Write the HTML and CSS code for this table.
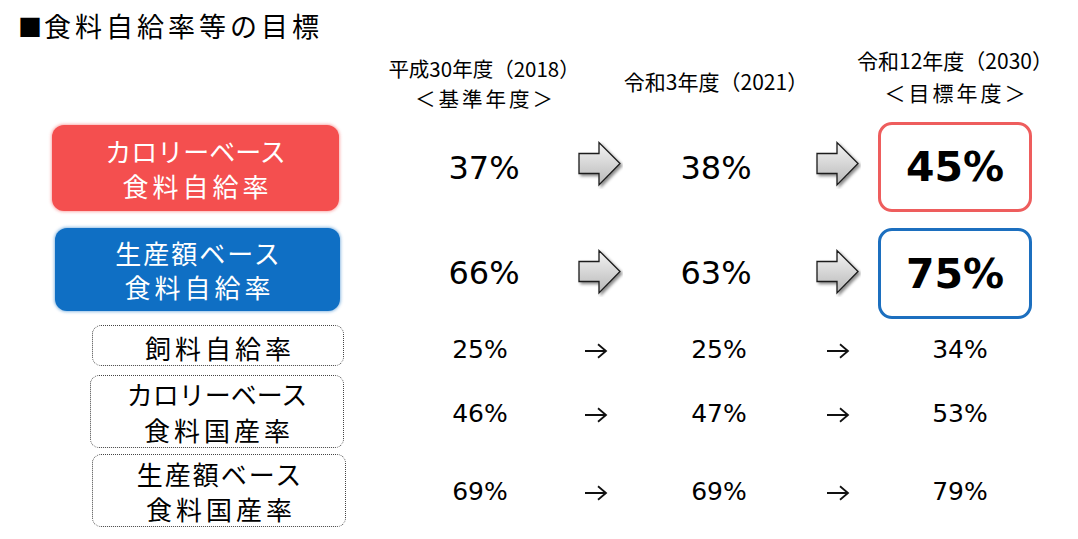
FILE: index.html
```html
<!DOCTYPE html>
<html lang="ja">
<head>
<meta charset="utf-8">
<title>食料自給率等の目標</title>
<link rel="stylesheet" href="styles.css">
</head>
<body>
<div class="page">
  <h1 class="title"><span class="sq">■</span>食料自給率等の目標</h1>

  <svg class="defs" width="0" height="0" aria-hidden="true">
    <defs>
      <linearGradient id="ag" x1="0" y1="0" x2="0" y2="1">
        <stop offset="0" stop-color="#f4f4f4"/>
        <stop offset="1" stop-color="#b8b8b8"/>
      </linearGradient>
      <filter id="ash" x="-20%" y="-20%" width="150%" height="150%">
        <feDropShadow dx="2" dy="2" stdDeviation="1.4" flood-color="#000" flood-opacity="0.45"/>
      </filter>
      <symbol id="garrow" viewBox="0 0 46 48">
        <path d="M2 12.5 H22 V1.5 L43 22.5 L22 44 V32.5 H2 Z" fill="url(#ag)" stroke="#1a1a1a" stroke-width="1.3" stroke-linejoin="miter" filter="url(#ash)"/>
      </symbol>
      <symbol id="sarrow" viewBox="0 0 24 16">
        <path d="M1 8 H22 M14 1.2 L22 8 L14 14.8" fill="none" stroke="#111" stroke-width="1.8"/>
      </symbol>
    </defs>
  </svg>

  <div class="grid">
    <div class="hd c1"><div>平成30年度（2018）</div><div class="sub">＜基準年度＞</div></div>
    <div class="hd c2">令和3年度（2021）</div>
    <div class="hd c3"><div>令和12年度（2030）</div><div class="sub">＜目標年度＞</div></div>

    <div class="lab red"><div class="kana">カロリーベース</div><div class="kanji">食料自給率</div></div>
    <div class="v1 big">37%</div>
    <div class="a1 garr up"><svg width="46" height="48"><use href="#garrow"/></svg></div>
    <div class="v2 big">38%</div>
    <div class="a2 garr up"><svg width="46" height="48"><use href="#garrow"/></svg></div>
    <div class="v3 goal goal-red">45%</div>

    <div class="lab blue"><div class="mix">生産額ベース</div><div class="kanji">食料自給率</div></div>
    <div class="v1 big">66%</div>
    <div class="a1 garr"><svg width="46" height="48"><use href="#garrow"/></svg></div>
    <div class="v2 big">63%</div>
    <div class="a2 garr"><svg width="46" height="48"><use href="#garrow"/></svg></div>
    <div class="v3 goal goal-blue">75%</div>

    <div class="lab dot one"><div class="kanji">飼料自給率</div></div>
    <div class="v1 small">25%</div>
    <div class="a1 sarr"><svg width="24" height="16"><use href="#sarrow"/></svg></div>
    <div class="v2 small">25%</div>
    <div class="a2 sarr"><svg width="24" height="16"><use href="#sarrow"/></svg></div>
    <div class="v3 small">34%</div>

    <div class="lab dot two"><div class="kana">カロリーベース</div><div class="kanji">食料国産率</div></div>
    <div class="v1 small">46%</div>
    <div class="a1 sarr"><svg width="24" height="16"><use href="#sarrow"/></svg></div>
    <div class="v2 small">47%</div>
    <div class="a2 sarr"><svg width="24" height="16"><use href="#sarrow"/></svg></div>
    <div class="v3 small">53%</div>

    <div class="lab dot two last"><div class="mix">生産額ベース</div><div class="kanji">食料国産率</div></div>
    <div class="v1 small">69%</div>
    <div class="a1 sarr"><svg width="24" height="16"><use href="#sarrow"/></svg></div>
    <div class="v2 small">69%</div>
    <div class="a2 sarr"><svg width="24" height="16"><use href="#sarrow"/></svg></div>
    <div class="v3 small">79%</div>
  </div>
</div>
</body>
</html>
```

FILE: styles.css
```css
html, body {
  margin: 0;
  padding: 0;
  background: #ffffff;
}

body {
  font-family: "Noto Sans CJK JP", "Noto Sans", sans-serif;
  color: #000;
  width: 1078px;
  height: 539px;
  overflow: hidden;
}

.page {
  position: relative;
}

.defs {
  position: absolute;
  width: 0;
  height: 0;
}

.title {
  margin: 0;
  height: 44px;
  box-sizing: border-box;
  padding: 12px 0 0 18px;
  font-size: 27px;
  line-height: 27px;
  font-weight: 400;
  letter-spacing: 4px;
  white-space: nowrap;
}

.title .sq {
  font-size: 24px;
  letter-spacing: 2px;
  vertical-align: 1px;
}

.grid {
  display: grid;
  margin-left: 52px;
  grid-template-columns: 292px 80px 120px 112px 120px 22px 80px 154px;
  grid-template-rows: 72px 104px 105px 48px 79px 78px;
}

/* headers */
.hd {
  font-size: 21px;
  white-space: nowrap;
  justify-self: center;
  align-self: start;
  text-align: center;
}
.hd .sub {
  letter-spacing: 3px;
  margin-right: -3px;
}
.c1 { grid-column: 3; font-size: 20.5px; line-height: 30px; margin-top: 9px; }
.c2 { grid-column: 5; line-height: 31px; margin-top: 22px; }
.c3 { grid-column: 8; line-height: 32px; margin-top: 0; }

/* columns */
.lab { grid-column: 1; }
.v1 { grid-column: 3; }
.a1 { grid-column: 4; }
.v2 { grid-column: 5; }
.a2 { grid-column: 7; }
.v3 { grid-column: 8; }

/* labels */
.lab {
  box-sizing: border-box;
  display: flex;
  flex-direction: column;
  justify-content: center;
  align-items: center;
  font-size: 26px;
  align-self: start;
  white-space: nowrap;
}
.lab .kanji { letter-spacing: 4px; margin-right: -4px; }
.lab .mix { letter-spacing: 2px; margin-right: -2px; }

.red {
  width: 287px;
  height: 86px;
  margin-top: 9px;
  border-radius: 12px;
  background: #f44f4f;
  box-shadow: 0 0 3px 1px rgba(244, 79, 79, 0.45);
  color: #fff;
  line-height: 35px;
}

.blue {
  width: 285px;
  height: 83px;
  margin-top: 8px;
  margin-left: 3px;
  border-radius: 12px;
  background: #0f6fc4;
  box-shadow: 0 0 3px 1px rgba(15, 111, 196, 0.45);
  color: #fff;
  line-height: 34px;
}

.dot {
  margin-left: 40px;
  width: 252px;
  border: 1px dotted #444;
  border-radius: 9px;
  color: #000;
}
.dot.one {
  height: 41px;
  margin-top: 0;
  line-height: 34px;
  padding-top: 4px;
}
.dot.two {
  height: 73px;
  margin-top: 2px;
  margin-left: 38px;
  width: 254px;
  line-height: 36px;
}
.dot.last {
  margin-left: 40px;
  line-height: 35px;
}

/* values */
.big, .small {
  font-family: "DejaVu Sans", "Noto Sans", sans-serif;
  justify-self: center;
  align-self: center;
  white-space: nowrap;
}
.big {
  font-size: 32px;
  line-height: 40px;
}
.small {
  font-size: 25px;
  line-height: 30px;
  margin-top: 2px;
}
.v1.small { margin-right: 8px; }
.v2.small { margin-left: 6px; }
.v3.small { margin-left: 10px; }

.garr {
  justify-self: center;
  align-self: center;
  display: flex;
}
.garr.up { margin-bottom: 6px; }

.sarr {
  justify-self: center;
  align-self: center;
  display: flex;
  margin-top: 4px;
}
.a1.sarr { margin-right: 8px; }

.goal {
  box-sizing: border-box;
  width: 154px;
  display: flex;
  justify-content: center;
  align-items: center;
  font-family: "DejaVu Sans", sans-serif;
  font-weight: 700;
  font-size: 41px;
  border-radius: 14px;
  background: #fff;
  align-self: start;
  white-space: nowrap;
}
.goal-red {
  height: 90px;
  margin-top: 6px;
  border: 3px solid #ee5d5d;
}
.goal-blue {
  height: 91px;
  margin-top: 8px;
  border: 3px solid #1c6fbf;
}
```
